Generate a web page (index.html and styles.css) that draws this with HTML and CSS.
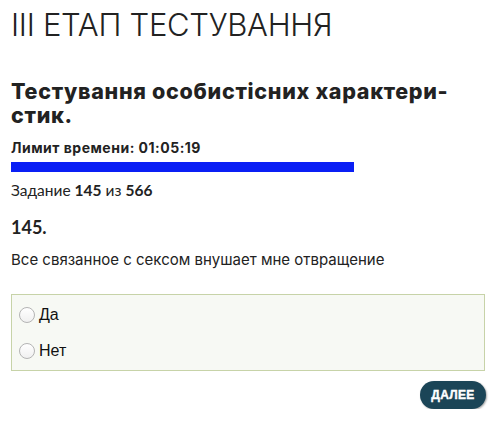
FILE: index.html
```html
<!DOCTYPE html>
<html>
<head>
<meta charset="utf-8">
<link rel="stylesheet" href="styles.css">
</head>
<body>
<div class="page">
  <h1 class="stage">III ЕТАП ТЕСТУВАННЯ</h1>
  <h2 class="test-title">Тестування особистісних характери-<br>стик.</h2>
  <div class="timer">Лимит времени: 01:05:19</div>
  <div class="progress"><div class="progress-bar" style="width:343px"></div></div>
  <div class="counter">Задание <b>145</b> из <b>566</b></div>
  <div class="qnum">145.</div>
  <div class="question">Все связанное с сексом внушает мне отвращение</div>
  <div class="answers">
    <label class="answer"><span class="radio"></span>Да</label>
    <label class="answer"><span class="radio"></span>Нет</label>
  </div>
  <div class="actions"><button class="next">ДАЛЕЕ</button></div>
</div>
</body>
</html>
```
FILE: styles.css
```css
html, body { margin: 0; padding: 0; background: #fff; }
body { font-family: "Open Sans", "Liberation Sans", sans-serif; color: #222; }
.page { padding: 0 8px 0 11px; }
.stage {
  margin: 0; padding-top: 9px;
  font-family: Inter, sans-serif; font-weight: 300;
  font-size: 31px; line-height: 32px; letter-spacing: -0.3px; color: #222;
}
.test-title {
  margin: 38px 0 0; font-family: Inter, sans-serif; font-weight: 800;
  font-size: 21.5px; line-height: 24px; color: #222; letter-spacing: 0.7px;
}
.timer { margin-top: 12px; font-family: Inter, sans-serif; font-weight: 700; font-size: 14px; line-height: 17px; letter-spacing: 0.5px; }
.progress { margin-top: 6px; height: 10px; }
.progress-bar { height: 10px; background: #0a1ff5; }
.counter { margin-top: 8px; font-family: Lato, sans-serif; font-size: 15.5px; line-height: 20px; }
.counter b { font-weight: 700; }
.qnum { margin-top: 16px; font-family: Lato, sans-serif; font-weight: 700; font-size: 18px; line-height: 22px; }
.question { margin-top: 12px; font-family: Inter, sans-serif; font-size: 15px; line-height: 20px; letter-spacing: 0; }
.answers {
  box-sizing: border-box; margin-top: 24px; width: 474px;
  border: 1px solid #c7d3a8; background: #f7f9f4;
  padding: 10px 0 9px 7px; display: flex; flex-direction: column; gap: 16px;
}
.answer { display: flex; align-items: center; gap: 4px; font-family: "Liberation Sans", sans-serif; font-size: 16px; line-height: 20px; color: #111; }
.radio {
  width: 14px; height: 14px; border-radius: 50%; border: 1px solid #b4b4b4;
  background: linear-gradient(#fff, #f0f0f0);
}
.actions { display: flex; justify-content: flex-end; width: 475px; margin-top: 10px; }
.next {
  background: #1b4557; color: #fff; border: none; border-radius: 14px;
  height: 28px; width: 66px; font-family: "Liberation Sans", sans-serif; font-weight: 700;
  font-size: 12px; letter-spacing: 0.3px; box-shadow: 1px 1px 2px rgba(0,0,0,0.35); padding: 0;
  -webkit-text-stroke: 0.4px #fff;
}
```
